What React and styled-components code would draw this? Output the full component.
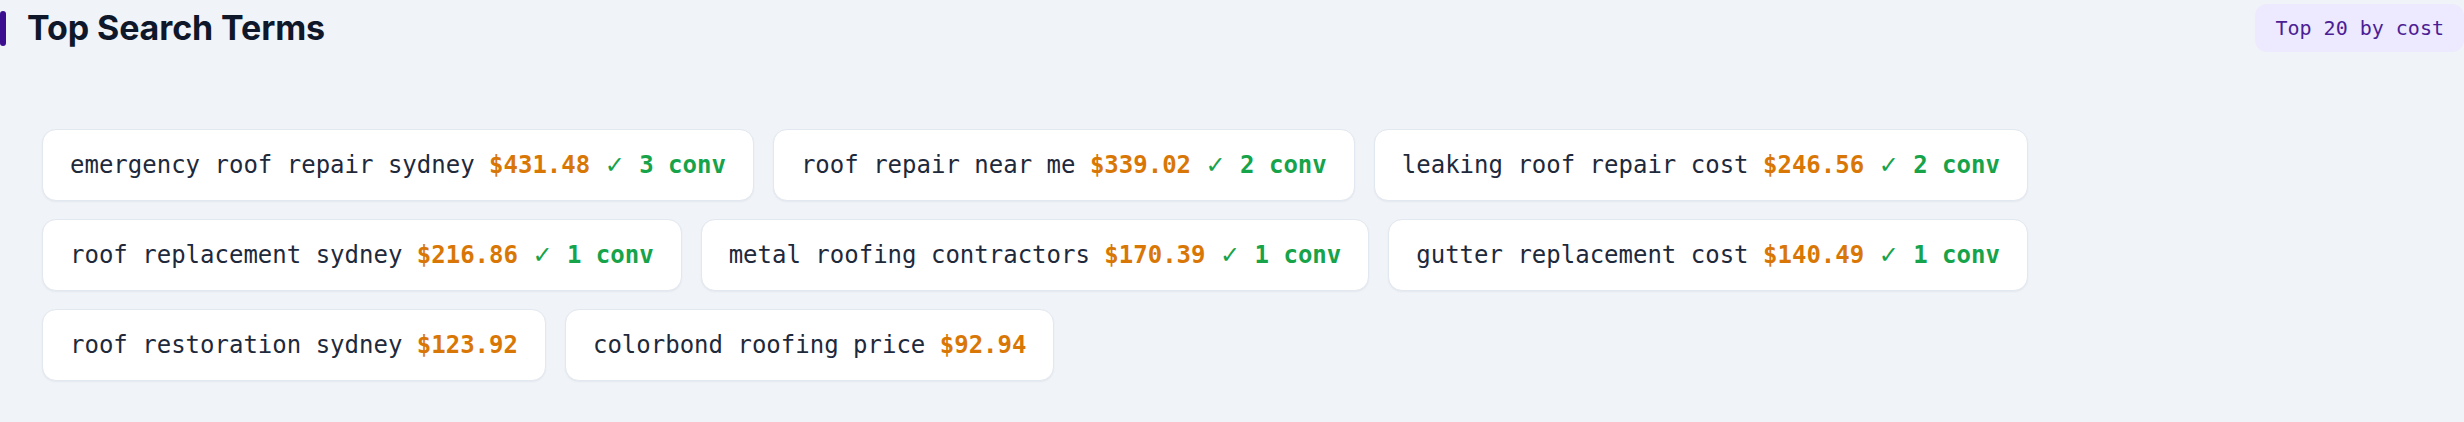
import React from "react";
import styled, { createGlobalStyle } from "styled-components";

const Global = createGlobalStyle`
  html, body { margin: 0; padding: 0; background: #f0f3f8; }
  #root { width: 2464px; }
`;

const Section = styled.section`
  width: 2464px;
  height: 422px;
  background: #f0f3f8;
  display: flex;
  flex-direction: column;
`;

const Header = styled.header`
  display: flex;
  align-items: center;
  justify-content: space-between;
  height: 56px;
`;

const TitleWrap = styled.div`
  display: flex;
  align-items: center;
  gap: 21px;
`;

const Accent = styled.span`
  display: block;
  width: 6px;
  height: 35px;
  border-radius: 3px;
  background: #3b0d8f;
`;

const Title = styled.h2`
  margin: 0;
  font-family: Inter, "Noto Sans", sans-serif;
  font-weight: 700;
  font-size: 34px;
  line-height: 40px;
  color: #0f172a;
  letter-spacing: -0.1px;
`;

const Badge = styled.span`
  font-family: "DejaVu Sans Mono", "Liberation Mono", monospace;
  font-size: 20px;
  line-height: 28px;
  padding: 10px 20px;
  border-radius: 12px;
  background: #ede9fe;
  color: #4c1d95;
`;

const ChipList = styled.div`
  display: flex;
  flex-wrap: wrap;
  gap: 18px 19px;
  padding: 73px 42px 0 42px;
`;

const Chip = styled.div`
  box-sizing: border-box;
  height: 72px;
  display: flex;
  align-items: center;
  padding: 0 27px;
  background: #ffffff;
  border: 1px solid #e2e8f0;
  border-radius: 14px;
  box-shadow: 0 1px 2px rgba(15, 23, 42, 0.05);
  font-family: "DejaVu Sans Mono", "Liberation Mono", monospace;
  font-size: 24px;
  line-height: 34px;
  white-space: pre;
  color: #1e293b;
`;

const Cost = styled.span`
  color: #d97706;
  font-weight: 700;
`;

const Conv = styled.span`
  color: #16a34a;
  font-weight: 700;
`;

const Check = styled.span`
  display: inline-block;
  font-family: "DejaVu Sans", sans-serif;
  font-weight: 400;
  font-size: 24px;
`;

const terms = [
  { term: "emergency roof repair sydney", cost: "$431.48", conv: 3 },
  { term: "roof repair near me", cost: "$339.02", conv: 2 },
  { term: "leaking roof repair cost", cost: "$246.56", conv: 2 },
  { term: "roof replacement sydney", cost: "$216.86", conv: 1 },
  { term: "metal roofing contractors", cost: "$170.39", conv: 1 },
  { term: "gutter replacement cost", cost: "$140.49", conv: 1 },
  { term: "roof restoration sydney", cost: "$123.92", conv: 0 },
  { term: "colorbond roofing price", cost: "$92.94", conv: 0 },
];

export default function App() {
  return (
    <>
      <Global />
      <Section>
        <Header>
          <TitleWrap>
            <Accent />
            <Title>Top Search Terms</Title>
          </TitleWrap>
          <Badge>Top 20 by cost</Badge>
        </Header>
        <ChipList>
          {terms.map((t) => (
            <Chip key={t.term}>
              {t.term} <Cost>{t.cost}</Cost>
              {t.conv > 0 && (
                <Conv>
                  {" "}
                  <Check>✓</Check>
                  {` ${t.conv} conv`}
                </Conv>
              )}
            </Chip>
          ))}
        </ChipList>
      </Section>
    </>
  );
}
